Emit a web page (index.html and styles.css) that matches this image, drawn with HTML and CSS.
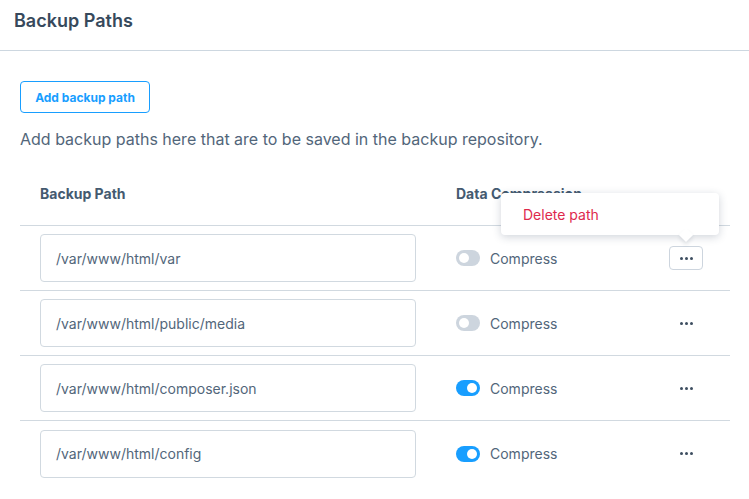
FILE: index.html
```html
<!DOCTYPE html>
<html>
<head>
<meta charset="utf-8">
<link rel="stylesheet" href="styles.css">
</head>
<body>
<div class="card">
  <div class="card-header">
    <h2 class="card-title">Backup Paths</h2>
  </div>
  <div class="card-body">
    <button class="btn-add">Add backup path</button>
    <p class="desc">Add backup paths here that are to be saved in the backup repository.</p>
    <div class="table">
      <div class="row head">
        <div class="cell">Backup Path</div>
        <div class="cell">Data Compression</div>
        <div class="cell"></div>
      </div>
      <div class="row">
        <div class="cell"><div class="input">/var/www/html/var</div></div>
        <div class="cell"><span class="toggle"></span><span class="label">Compress</span></div>
        <div class="cell">
          <div class="menu-wrap">
            <div class="popover"><span>Delete path</span></div>
            <button class="dots active"><i></i><i></i><i></i></button>
          </div>
        </div>
      </div>
      <div class="row">
        <div class="cell"><div class="input">/var/www/html/public/media</div></div>
        <div class="cell"><span class="toggle"></span><span class="label">Compress</span></div>
        <div class="cell"><button class="dots"><i></i><i></i><i></i></button></div>
      </div>
      <div class="row">
        <div class="cell"><div class="input">/var/www/html/composer.json</div></div>
        <div class="cell"><span class="toggle on"></span><span class="label">Compress</span></div>
        <div class="cell"><button class="dots"><i></i><i></i><i></i></button></div>
      </div>
      <div class="row last">
        <div class="cell"><div class="input">/var/www/html/config</div></div>
        <div class="cell"><span class="toggle on"></span><span class="label">Compress</span></div>
        <div class="cell"><button class="dots"><i></i><i></i><i></i></button></div>
      </div>
    </div>
  </div>
</div>
</body>
</html>
```

FILE: styles.css
```css
* { box-sizing: border-box; }
html, body { margin: 0; padding: 0; background: #fff; }
body { font-family: Inter, "Noto Sans", sans-serif; color: #52667a; }

.card-header {
  padding: 9px 14px 17px;
  border-bottom: 1px solid #cdd7e0;
}
.card-title {
  margin: 0;
  font-size: 18px;
  line-height: 24px;
  font-weight: 600;
  color: #37495c;
}
.card-body { padding: 30px 19px 0 20px; }

.btn-add {
  display: block;
  width: 130px;
  height: 32px;
  padding: 0;
  border: 1px solid #189eff;
  border-radius: 4px;
  background: #fff;
  color: #189eff;
  font-family: inherit;
  font-size: 12px;
  font-weight: 700;
}
.desc {
  margin: 15px 0 0;
  font-size: 16px;
  line-height: 22px;
  color: #52667a;
}

.table { margin-top: 20px; }
.row {
  display: grid;
  grid-template-columns: 416px 213px 81px;
  height: 65px;
  border-bottom: 1px solid #d1d9e0;
  align-items: center;
}
.row.head {
  height: 56px;
  align-items: start;
  padding-top: 16px;
}
.row.last { border-bottom: none; }
.cell {
  padding-left: 20px;
  display: flex;
  align-items: center;
}
.row.head .cell {
  font-size: 14px;
  line-height: 16px;
  font-weight: 700;
  color: #445a70;
}

.input {
  width: 376px;
  height: 48px;
  border: 1px solid #d1d9e0;
  border-radius: 4px;
  padding: 0 15px;
  display: flex;
  align-items: center;
  font-size: 14px;
  color: #52667a;
}

.toggle {
  position: relative;
  width: 24px;
  height: 16px;
  border-radius: 8px;
  background: #cdd5de;
  flex: none;
}
.toggle::after {
  content: "";
  position: absolute;
  left: 3px;
  top: 3px;
  width: 10px;
  height: 10px;
  border-radius: 50%;
  background: #fff;
}
.toggle.on { background: #189eff; }
.toggle.on::after { left: 11px; }
.label {
  margin-left: 10px;
  font-size: 14px;
  color: #52667a;
}

.menu-wrap { position: relative; }
.dots {
  width: 34px;
  height: 24px;
  padding: 0;
  border: 1px solid transparent;
  border-radius: 4px;
  background: #fff;
  display: flex;
  align-items: center;
  justify-content: center;
  gap: 2px;
}
.dots.active { border-color: #cdd5de; }
.dots i {
  display: block;
  width: 3px;
  height: 3px;
  border-radius: 50%;
  background: #3d4e60;
}
.popover {
  position: absolute;
  right: -16px;
  bottom: 35px;
  width: 218px;
  height: 42px;
  background: #fff;
  border-radius: 4px;
  box-shadow: 0 2px 8px rgba(40, 60, 85, 0.22);
  display: flex;
  align-items: center;
  padding-left: 22px;
  font-size: 14px;
  color: #de294c;
  z-index: 2;
}
.popover::after {
  content: "";
  position: absolute;
  right: 28px;
  bottom: -5px;
  width: 10px;
  height: 10px;
  background: #fff;
  transform: rotate(45deg);
  box-shadow: 2px 2px 4px rgba(40, 60, 85, 0.12);
}
```
